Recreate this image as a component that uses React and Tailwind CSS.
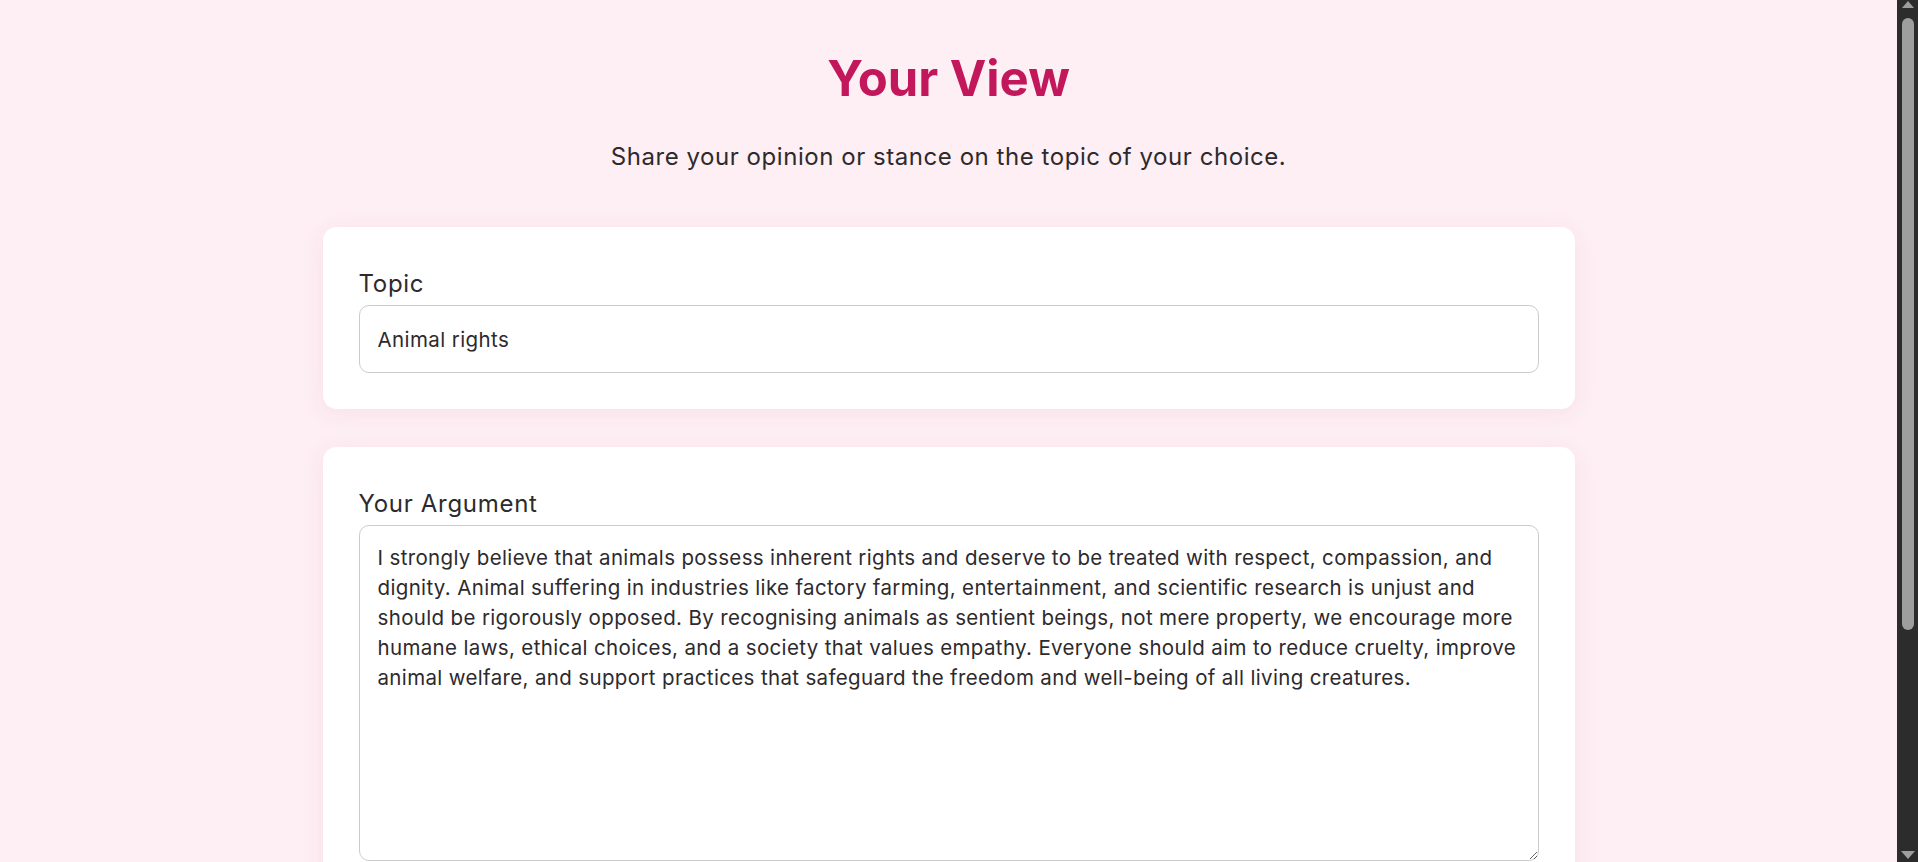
import { useState } from 'react';

const ARGUMENT =
    'I strongly believe that animals possess inherent rights and deserve to be treated with respect, compassion, and dignity. Animal suffering in industries like factory farming, entertainment, and scientific research is unjust and should be rigorously opposed. By recognising animals as sentient beings, not mere property, we encourage more humane laws, ethical choices, and a society that values empathy. Everyone should aim to reduce cruelty, improve animal welfare, and support practices that safeguard the freedom and well-being of all living creatures.';

const Field = ({ label, children }) => (
    <div className="bg-white rounded-[14px] p-[36px] shadow-[0_4px_24px_rgba(194,24,91,0.07)]">
        <label className="block text-[24px] leading-[33px] tracking-[0.7px] mt-[4px] mb-[5px] text-[#2d2a2e]">{label}</label>
        {children}
    </div>
);

// window scrollbar as it shows in the screenshot
const ScrollBar = () => (
    <div className="w-[21px] h-screen bg-[#2c2c2c] flex flex-col items-center pl-[1px]">
        <div className="w-0 h-0 mt-[1px] border-l-[6px] border-r-[6px] border-b-[7px] border-l-transparent border-r-transparent border-b-[#9e9e9e]"></div>
        <div className="w-[12px] h-[612px] mt-[10px] rounded-t-full rounded-b-full bg-[#9e9e9e]"></div>
        <div className="flex-1"></div>
        <div className="w-0 h-0 mb-[3px] border-l-[7px] border-r-[7px] border-t-[8px] border-l-transparent border-r-transparent border-t-[#9e9e9e]"></div>
    </div>
);

export default function App() {
    const [topic, setTopic] = useState('Animal rights');
    const [argument, setArgument] = useState(ARGUMENT);

    return (
        <div className="h-screen flex bg-[#fdeff4] overflow-hidden">
            <div className="flex-1 overflow-hidden font-['Inter',sans-serif] text-[#2d2a2e] pt-[49px] pb-[60px]">
                <header className="text-center">
                    <h1 className="text-[49px] leading-[60px] font-bold text-[#c2185b]">Your View</h1>
                    <p className="mt-[31px] text-[24px] leading-[33px] tracking-[0.55px]">
                        Share your opinion or stance on the topic of your choice.
                    </p>
                </header>

                <main className="w-[1252px] mx-auto mt-[54px] flex flex-col gap-[38px]">
                    <Field label="Topic">
                        <input
                            type="text"
                            value={topic}
                            onChange={e => setTopic(e.target.value)}
                            className="block w-full h-[68px] px-[18px] bg-white border border-[#cccccc] rounded-[10px] text-[20.5px] tracking-[0.4px] text-[#2d2a2e] outline-none"
                        />
                    </Field>

                    <Field label="Your Argument">
                        <textarea
                            value={argument}
                            onChange={e => setArgument(e.target.value)}
                            className="block w-full h-[336px] pl-[18px] pr-[10px] py-[17px] bg-white border border-[#cccccc] rounded-[10px] text-[20.5px] leading-[30px] tracking-[0.35px] text-[#2d2a2e] outline-none resize-y"
                        />
                    </Field>
                </main>
            </div>
            <ScrollBar />
        </div>
    );
}
